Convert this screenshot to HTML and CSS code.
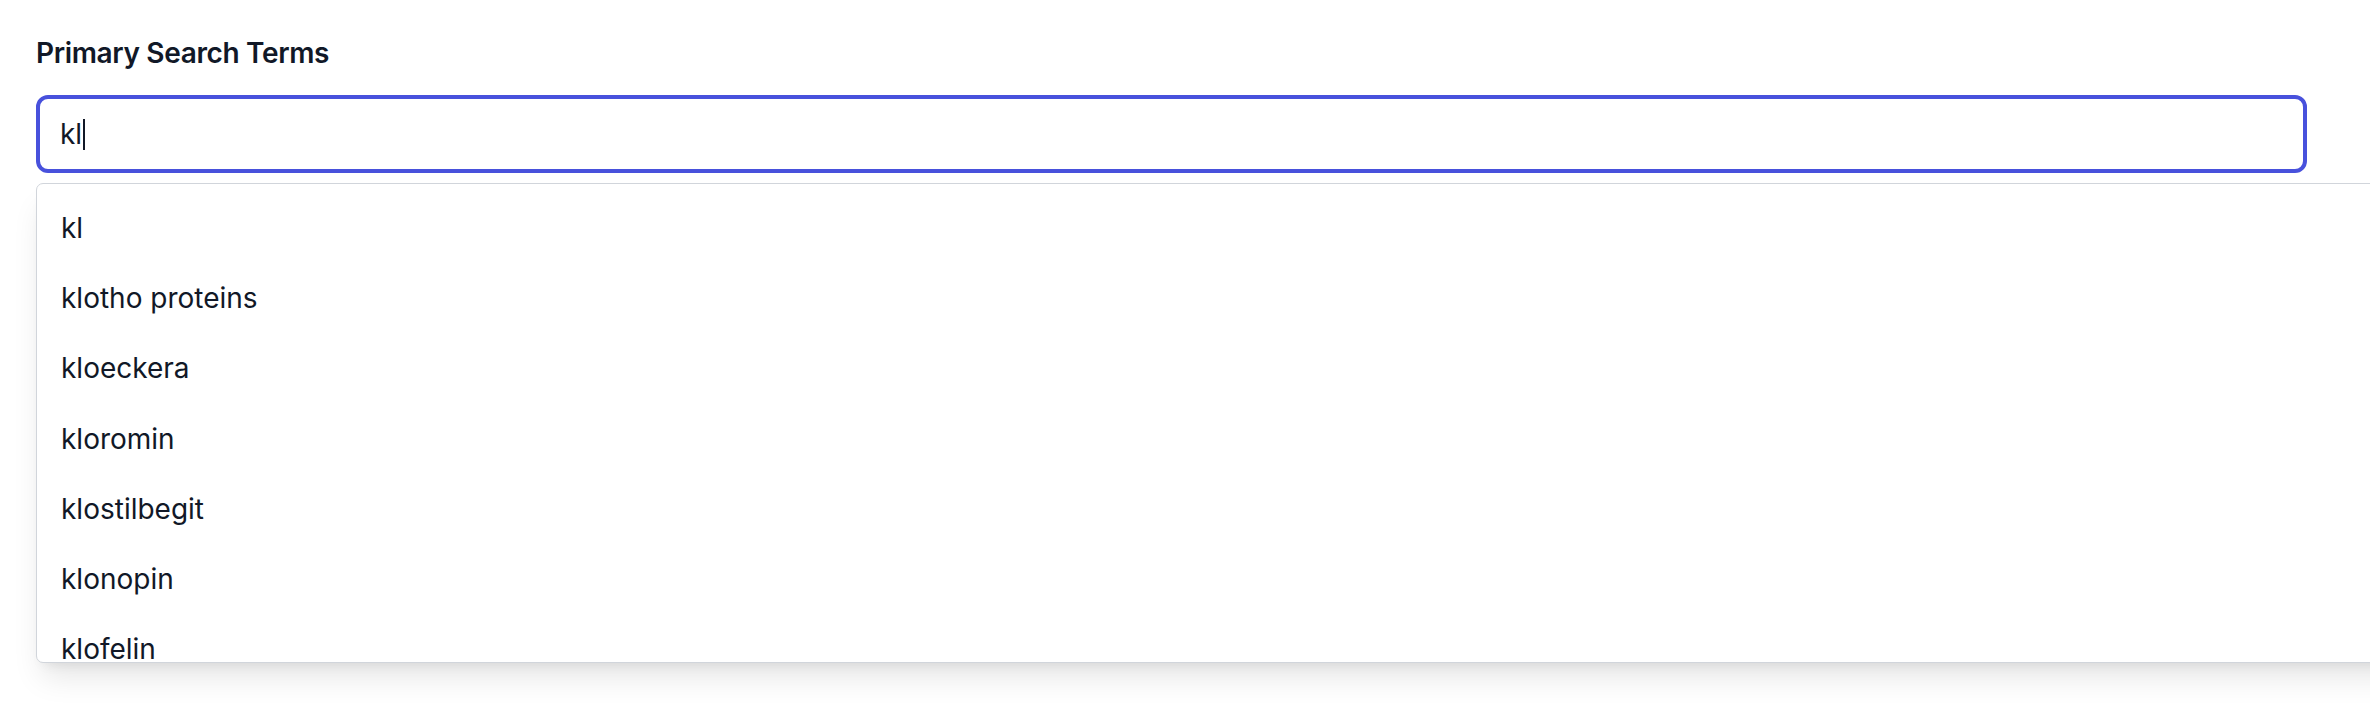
FILE: index.html
```html
<!DOCTYPE html>
<html lang="en">
<head>
<meta charset="utf-8">
<title>Primary Search Terms</title>
<link rel="stylesheet" href="styles.css">
</head>
<body>
<div class="page">
  <div class="field">
    <label class="field-label">Primary Search Terms</label>
    <div class="combo">
      <div class="search-input" role="textbox"><span class="value">kl</span><span class="caret"></span></div>
      <ul class="suggestions">
        <li class="option">kl</li>
        <li class="option">klotho proteins</li>
        <li class="option">kloeckera</li>
        <li class="option">kloromin</li>
        <li class="option">klostilbegit</li>
        <li class="option">klonopin</li>
        <li class="option">klofelin</li>
      </ul>
    </div>
  </div>
</div>
</body>
</html>
```

FILE: styles.css
```css
* { box-sizing: border-box; }

html, body {
  margin: 0;
  padding: 0;
  background: #ffffff;
  overflow: hidden;
}

body {
  font-family: Inter, "Noto Sans", "Liberation Sans", sans-serif;
  color: #111827;
  width: 2370px;
  height: 704px;
}

.page {
  padding: 33px 63px 0 36px;
}

.field {
  display: flex;
  flex-direction: column;
  gap: 22px;
}

.field-label {
  font-size: 28px;
  line-height: 40px;
  font-weight: 600;
  color: #111827;
  letter-spacing: -0.35px;
}

.combo {
  position: relative;
}

.search-input {
  display: flex;
  align-items: center;
  height: 78px;
  border: 4px solid #4851dc;
  border-radius: 12px;
  padding: 15px 20px;
  font-size: 28px;
  line-height: 40px;
  color: #111827;
}

.caret {
  display: inline-block;
  width: 2px;
  height: 31px;
  background: #111827;
  margin-left: 1px;
}

.suggestions {
  position: absolute;
  top: 88px;
  left: 0;
  width: 2420px;
  height: 480px;
  margin: 0;
  padding: 9px 0 0 0;
  list-style: none;
  background: #ffffff;
  border: 1px solid #d1d5db;
  border-radius: 7px;
  overflow: hidden;
  box-shadow: 0 20px 30px -6px rgba(0, 0, 0, 0.1), 0 8px 12px -8px rgba(0, 0, 0, 0.1);
}

.option {
  padding: 15.1px 24px;
  font-size: 28px;
  line-height: 40px;
  color: #111827;
}
```
